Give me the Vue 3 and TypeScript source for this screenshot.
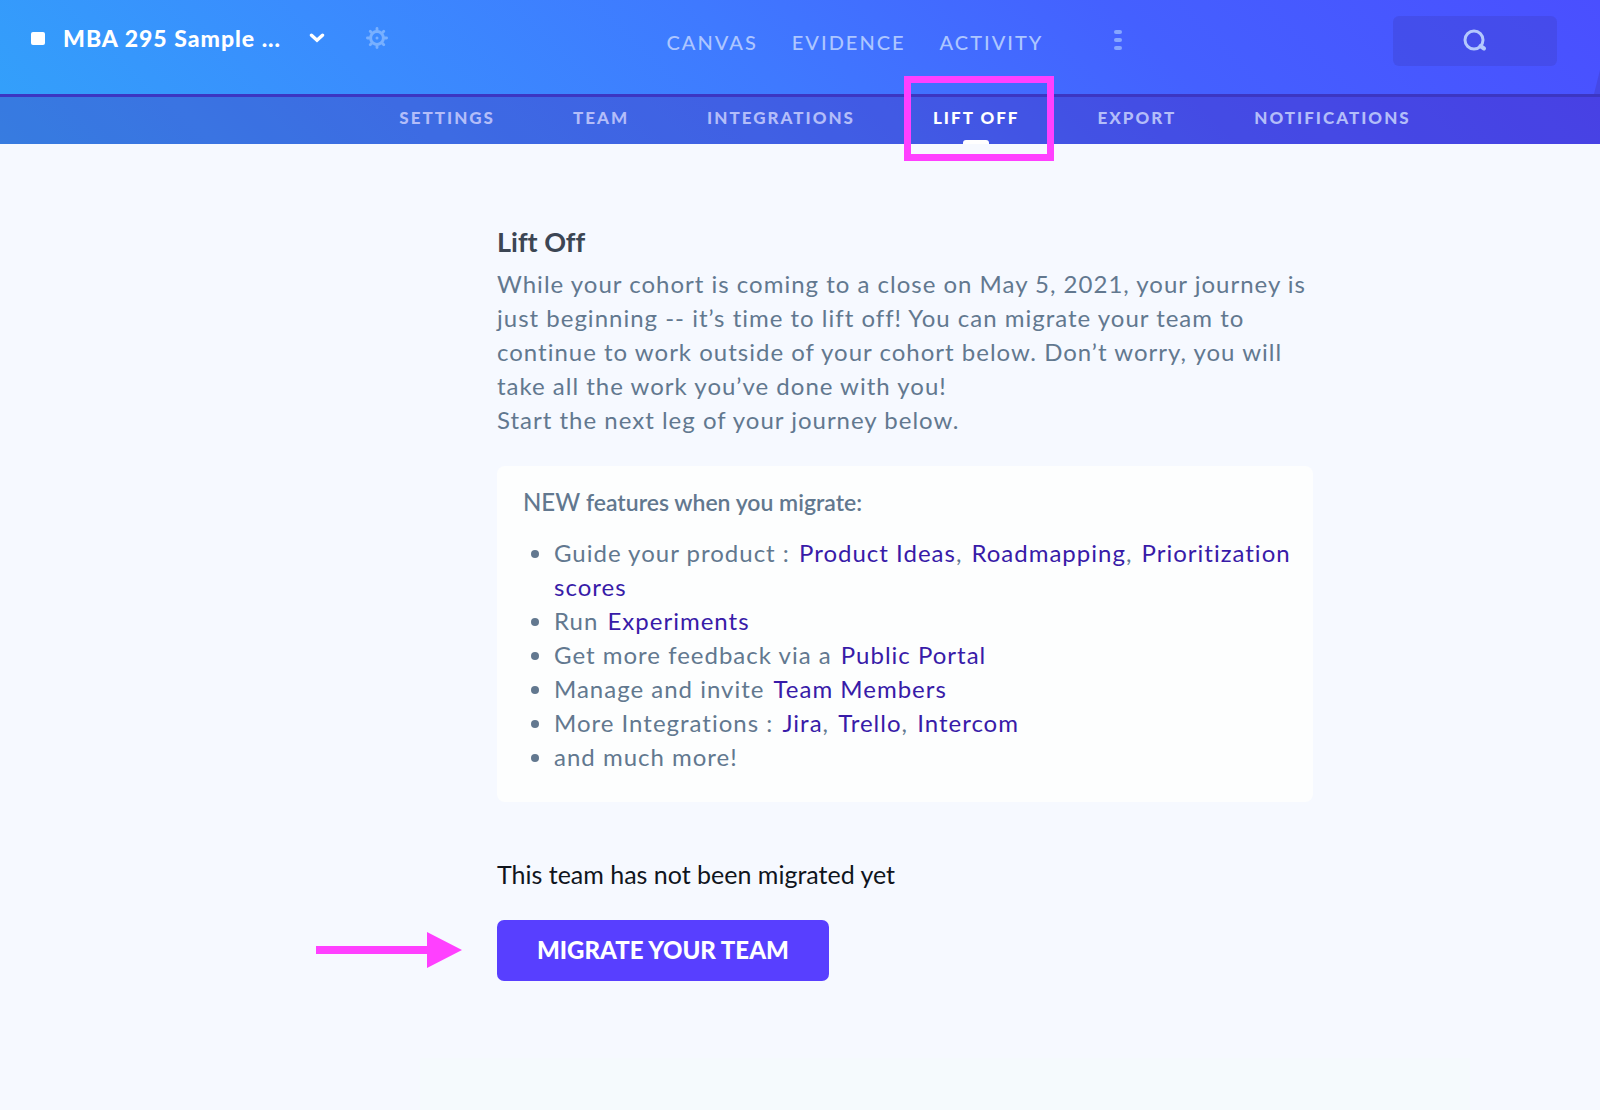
<script setup lang="ts">
interface Part {
  text: string
  link?: boolean
}

const mainNav: string[] = ['Canvas', 'Evidence', 'Activity']
const subNav: string[] = ['Settings', 'Team', 'Integrations', 'Lift Off', 'Export', 'Notifications']
const activeTab = 'Lift Off'
const teeth: number[] = [0, 45, 90, 135, 180, 225, 270, 315]

const features: Part[][] = [
  [
    { text: 'Guide your product : ' },
    { text: 'Product Ideas', link: true },
    { text: ', ' },
    { text: 'Roadmapping', link: true },
    { text: ', ' },
    { text: 'Prioritization scores', link: true },
  ],
  [{ text: 'Run ' }, { text: 'Experiments', link: true }],
  [{ text: 'Get more feedback via a ' }, { text: 'Public Portal', link: true }],
  [{ text: 'Manage and invite ' }, { text: 'Team Members', link: true }],
  [
    { text: 'More Integrations : ' },
    { text: 'Jira', link: true },
    { text: ', ' },
    { text: 'Trello', link: true },
    { text: ', ' },
    { text: 'Intercom', link: true },
  ],
  [{ text: 'and much more!' }],
]
</script>

<template>
  <div class="page">
    <header class="header">
      <div class="topbar">
        <div class="project">
          <span class="project-mark"></span>
          <button class="project-switch" type="button">
            <span>MBA 295 Sample ...</span>
            <svg width="16" height="10" viewBox="0 0 16 10" aria-hidden="true">
              <path d="M2.500 2.200 8 7.200 13.500 2.200" fill="none" stroke="currentColor" stroke-width="3.400" stroke-linecap="round" />
            </svg>
          </button>
          <button class="gear" type="button" aria-label="Project settings">
            <svg width="22" height="22" viewBox="0 0 22 22" aria-hidden="true">
              <circle cx="11" cy="11" r="6.400" fill="none" stroke="currentColor" stroke-width="3" />
              <circle cx="11" cy="11" r="1.500" fill="currentColor" />
              <path
                v-for="angle in teeth"
                :key="angle"
                d="M11 3.500V1.400"
                stroke="currentColor"
                stroke-width="2.800"
                stroke-linecap="round"
                :transform="`rotate(${angle} 11 11)`"
              />
            </svg>
          </button>
        </div>
        <nav class="main-nav" aria-label="Main">
          <a v-for="item in mainNav" :key="item" href="#">{{ item }}</a>
        </nav>
        <div class="tools">
          <button class="more" type="button" aria-label="More">
            <span></span>
            <span></span>
            <span></span>
          </button>
          <button class="search" type="button" aria-label="Search">
            <svg width="24" height="24" viewBox="0 0 24 24" aria-hidden="true">
              <circle cx="11" cy="11" r="9" fill="none" stroke="currentColor" stroke-width="3" />
              <path d="M17.500 17 21 19.500" stroke="currentColor" stroke-width="4" stroke-linecap="round" />
            </svg>
          </button>
        </div>
        <span class="corner"></span>
      </div>
      <nav class="sub-nav" aria-label="Settings">
        <a v-for="item in subNav" :key="item" href="#" :class="{ active: item === activeTab }">
          {{ item }}
          <span v-if="item === activeTab" class="callout"></span>
        </a>
      </nav>
    </header>

    <main class="main">
      <section class="content">
        <h1>Lift Off</h1>
        <p class="intro">
          While your cohort is coming to a close on May 5, 2021, your journey is just beginning -- it’s time to
          lift off! You can migrate your team to continue to work outside of your cohort below. Don’t worry, you
          will take all the work you’ve done with you!<br />Start the next leg of your journey below.
        </p>

        <div class="card">
          <h2><span>NEW</span> features when you migrate:</h2>
          <ul>
            <li v-for="(parts, row) in features" :key="row">
              <template v-for="(part, i) in parts" :key="i"
                ><a v-if="part.link" href="#">{{ part.text }}</a
                ><template v-else>{{ part.text }}</template></template
              >
            </li>
          </ul>
        </div>

        <p class="status">This team has not been migrated yet</p>
        <div class="action">
          <button class="migrate" type="button">Migrate your team</button>
          <svg class="arrow" width="146" height="36" viewBox="0 0 146 36" aria-hidden="true">
            <path d="M0 14H111V0L146 18 111 36V22H0Z" fill="#ff40ff" />
          </svg>
        </div>
      </section>
      <div class="panel"></div>
    </main>
  </div>
</template>

<style>
body {
  margin: 0;
  background: #f6f9ff;
}
</style>

<style scoped>
.page {
  display: flex;
  flex-direction: column;
  min-height: 100vh;
  font-family: Lato, 'Liberation Sans', sans-serif;
  font-size: 24px;
  line-height: 34px;
  color: #62788f;
}

button {
  border: 0;
  padding: 0;
  background: none;
  font: inherit;
  color: inherit;
  letter-spacing: inherit;
  cursor: pointer;
}

a {
  text-decoration: none;
}

svg {
  display: block;
}

.header {
  background: linear-gradient(45deg, #32a2fa 0%, #3a8cfe 25%, #3f79ff 48%, #4460ff 72%, #4a4fff 100%);
}

.topbar {
  position: relative;
  display: grid;
  grid-template-columns: 1fr auto 1fr;
  height: 94px;
  overflow: hidden;
}

.project {
  display: flex;
  align-items: center;
  height: 76px;
  padding-left: 31px;
  color: #fff;
}

.project-mark {
  width: 14px;
  height: 13px;
  margin-right: 18px;
  border-radius: 2px;
  background: #fff;
}

.project-switch {
  display: flex;
  align-items: center;
  gap: 28px;
  font-size: 23px;
  font-weight: 900;
  letter-spacing: 1px;
}

.gear {
  margin-left: 41px;
  color: #78b0ff;
}

.main-nav {
  display: flex;
  gap: 34px;
  padding: 25px 0 0 110px;
}

.main-nav a {
  font-size: 20px;
  font-weight: 500;
  letter-spacing: 2px;
  text-transform: uppercase;
  color: #adc6ff;
}

.tools {
  display: flex;
  justify-content: space-between;
  align-items: flex-start;
  padding: 16px 43px 0 71px;
}

.more {
  display: flex;
  flex-direction: column;
  gap: 4px;
  margin-top: 14px;
}

.more span {
  width: 8px;
  height: 4px;
  border-radius: 2px;
  background: #86a6ff;
}

.search {
  display: flex;
  align-items: center;
  justify-content: center;
  width: 164px;
  height: 50px;
  border-radius: 6px;
  background: rgba(60, 60, 190, 0.3);
  color: #b4c8fd;
}

.corner {
  position: absolute;
  right: 0;
  bottom: 0;
  width: 6px;
  height: 24px;
  background: #4548e6;
  clip-path: polygon(100% 0, 100% 100%, 0 100%);
}

.sub-nav {
  display: flex;
  justify-content: center;
  gap: 78px;
  height: 47px;
  padding-left: 210px;
  border-top: 3px solid #3c36c2;
  background: rgba(68, 16, 150, 0.26);
}

.sub-nav a {
  position: relative;
  padding-top: 4px;
  font-size: 17px;
  font-weight: 900;
  letter-spacing: 2px;
  text-transform: uppercase;
  color: #b3bdf9;
}

.sub-nav .active {
  color: #fff;
}

.sub-nav .active::after {
  content: '';
  position: absolute;
  left: calc(50% - 13px);
  bottom: 0;
  width: 26px;
  height: 4px;
  border-radius: 3px 3px 0 0;
  background: #fff;
}

.callout {
  position: absolute;
  inset: -21px -35px -17px -29px;
  border: 7px solid #ff40ff;
}

.main {
  display: flex;
  flex: 1;
  flex-direction: column;
  align-items: center;
  padding: 81px 0 0 210px;
}

.content {
  width: 816px;
}

h1 {
  margin: 0 0 8px;
  font-size: 27px;
  line-height: 34px;
  font-weight: 700;
  font-variant-ligatures: none;
  color: #3c4654;
}

.intro {
  margin: 0 0 29px;
  letter-spacing: 1px;
}

.card {
  padding: 19px 20px 28px 26px;
  border-radius: 8px;
  background: #fdfefe;
}

h2 {
  margin: 0 0 17px;
  font-size: 23px;
  line-height: 34px;
  font-weight: 600;
}

h2 span {
  font-size: 24px;
  font-weight: 500;
}

ul {
  margin: 0;
  padding: 0 0 0 31px;
  letter-spacing: 1px;
}

li a {
  margin-left: 2px;
  color: #381ba8;
}

.status {
  margin: 55px 0 29px;
  font-size: 25px;
  color: #10151d;
}

.action {
  position: relative;
}

.migrate {
  height: 61px;
  padding: 0 40px 2px;
  border-radius: 7px;
  background: #583fff;
  font-size: 24px;
  font-weight: 900;
  text-transform: uppercase;
  color: #fff;
}

.arrow {
  position: absolute;
  top: 12px;
  right: calc(100% + 35px);
}

.panel {
  flex: 1;
  align-self: stretch;
  margin: 77px 130px 0 210px;
  background: #f5fafd;
}
</style>
